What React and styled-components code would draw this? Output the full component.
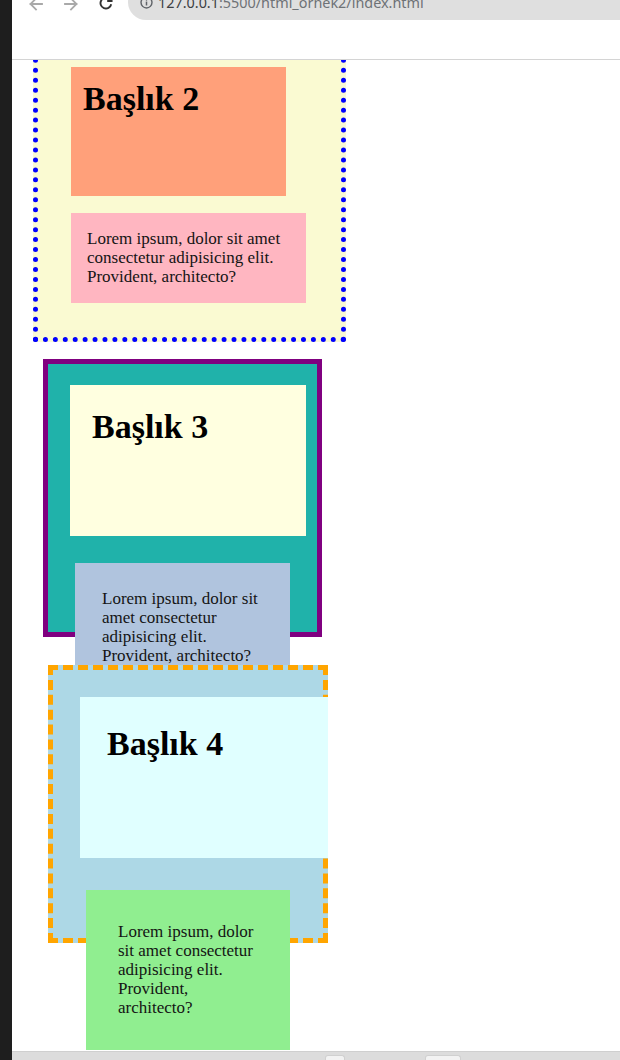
import React from 'react';
import styled, { createGlobalStyle } from 'styled-components';

const GlobalStyle = createGlobalStyle`
  html, body { margin: 0; padding: 0; background: #ffffff; overflow: hidden; }
  #root { width: 620px; height: 1060px; }
`;

const Frame = styled.div`
  display: flex;
  width: 620px;
  height: 1060px;
  overflow: hidden;
`;

const SideStrip = styled.div`
  flex: none;
  width: 12px;
  background: #1e1e1e;
`;

const BrowserWindow = styled.div`
  flex: 1;
  min-width: 0;
  display: flex;
  flex-direction: column;
  background: #ffffff;
`;

const Toolbar = styled.header`
  flex: none;
  height: 59px;
  border-bottom: 1px solid #d4d4d4;
  overflow: hidden;
  background: #ffffff;
`;

const NavRow = styled.div`
  height: 36px;
  margin-top: -16px;
  display: flex;
  align-items: center;
  padding-left: 16px;
`;

const NavButtons = styled.div`
  display: flex;
  align-items: center;
  gap: 19px;
`;

const NavIcon = styled.svg`
  flex: none;
  width: 16px;
  height: 16px;
  margin-top: ${p => p.$drop || 0}px;
  color: ${p => (p.$disabled ? '#a9a9a9' : '#333333')};
`;

const AddressPill = styled.div`
  flex: 1;
  height: 36px;
  margin-left: 14px;
  border-radius: 18px 0 0 18px;
  background: #dfdfdf;
  display: flex;
  align-items: center;
  padding-left: 12px;
  gap: 5px;
`;

const InfoIcon = styled.svg`
  flex: none;
  width: 13px;
  height: 13px;
  margin-top: 1px;
  color: #5f6368;
`;

const AddressText = styled.span`
  font-family: "Noto Sans", "Liberation Sans", sans-serif;
  font-size: 14.4px;
  color: #6e7276;
  white-space: nowrap;
  margin-top: 1px;
`;

const Host = styled.span`
  color: #3c4043;
`;

const Viewport = styled.main`
  flex: 1;
  min-height: 0;
  overflow: hidden;
`;

const Page = styled.div`
  margin-top: -32px;
  font-family: "Liberation Serif", "Times New Roman", serif;
  color: #111111;
`;

const DottedPanel = styled.section`
  box-sizing: border-box;
  width: 313px;
  margin-left: 21px;
  border: 5px dotted #0000ff;
  background: #fafad2;
  padding: 34px 0 34px 33px;
`;

const FramedPanel = styled.section`
  box-sizing: border-box;
  width: 279px;
  height: 278px;
  margin: 17px 0 0 31px;
  border: 5px solid #800080;
  background: #20b2aa;
  padding: 21px 0 0 22px;
`;

const DashedPanel = styled.section`
  box-sizing: border-box;
  width: 280px;
  height: 278px;
  margin: 28px 0 0 36px;
  border: 5px dashed #ffa500;
  background: #add8e6;
  padding: 27px 0 0 27px;
`;

const TitleCard = styled.div`
  box-sizing: border-box;
  width: ${p => p.$w}px;
  height: ${p => p.$h}px;
  padding: ${p => p.$pad}px;
  background: ${p => p.$bg};
`;

const Title = styled.h2`
  margin: 0;
  font-family: "Liberation Serif", "Times New Roman", serif;
  font-weight: bold;
  font-size: 34px;
  line-height: 39px;
  color: #000000;
  white-space: nowrap;
`;

const TextCard = styled.div`
  box-sizing: border-box;
  width: ${p => p.$w}px;
  margin: ${p => p.$mt}px 0 0 ${p => p.$ml}px;
  padding: ${p => p.$pad};
  background: ${p => p.$bg};
`;

const BodyText = styled.p`
  margin: 0;
  font-family: "Liberation Serif", "Times New Roman", serif;
  font-size: 17px;
  line-height: 19.2px;
  color: #141414;
`;

const StatusBar = styled.footer`
  flex: none;
  box-sizing: border-box;
  height: 9px;
  background: #dcdcdc;
  border-top: 1px solid #cfcfcf;
  display: flex;
  align-items: flex-end;
  padding-left: 313px;
  gap: 80px;
`;

const StatusChip = styled.div`
  width: ${p => p.$w}px;
  height: 4px;
  border-radius: 3px 3px 0 0;
  background: #f2f2f2;
  border: 1px solid #d0d0d0;
  border-bottom: none;
`;

const LOREM = 'Lorem ipsum, dolor sit amet consectetur adipisicing elit. Provident, architecto?';

function BackIcon() {
  return (
    <NavIcon viewBox="0 0 16 16" $disabled $drop={4} fill="none" stroke="currentColor" strokeWidth="1.8" strokeLinecap="square">
      <path d="M14 8H2.5M8 2.5L2.5 8L8 13.5" />
    </NavIcon>
  );
}

function ForwardIcon() {
  return (
    <NavIcon viewBox="0 0 16 16" $disabled $drop={4} fill="none" stroke="currentColor" strokeWidth="1.8" strokeLinecap="square">
      <path d="M2 8h11.5M8 2.5L13.5 8L8 13.5" />
    </NavIcon>
  );
}

function ReloadIcon() {
  return (
    <NavIcon viewBox="0 0 16 16" $drop={2} fill="none" stroke="currentColor" strokeWidth="1.9">
      <path d="M13.2 9.2A5.4 5.4 0 1 1 11.6 4.2" />
      <path d="M13.6 1.6v4.4H9.2" strokeLinejoin="miter" />
    </NavIcon>
  );
}

function SiteInfoIcon() {
  return (
    <InfoIcon viewBox="0 0 14 14" fill="none">
      <circle cx="7" cy="7" r="5.9" stroke="currentColor" strokeWidth="1.5" />
      <path d="M7 6v4.2" stroke="currentColor" strokeWidth="1.6" />
      <circle cx="7" cy="4.1" r="0.9" fill="currentColor" />
    </InfoIcon>
  );
}

export default function App() {
  return (
    <>
      <GlobalStyle />
      <Frame>
        <SideStrip />
        <BrowserWindow>
          <Toolbar>
            <NavRow>
              <NavButtons>
                <BackIcon />
                <ForwardIcon />
                <ReloadIcon />
              </NavButtons>
              <AddressPill>
                <SiteInfoIcon />
                <AddressText>
                  <Host>127.0.0.1</Host>:5500/html_ornek2/index.html
                </AddressText>
              </AddressPill>
            </NavRow>
          </Toolbar>

          <Viewport>
            <Page>
              <DottedPanel>
                <TitleCard $w={215} $h={129} $pad={12} $bg="#ffa07a">
                  <Title>Başlık 2</Title>
                </TitleCard>
                <TextCard $w={235} $mt={17} $ml={0} $pad="16px" $bg="#ffb6c1">
                  <BodyText>{LOREM}</BodyText>
                </TextCard>
              </DottedPanel>

              <FramedPanel>
                <TitleCard $w={236} $h={151} $pad={22} $bg="#ffffe0">
                  <Title>Başlık 3</Title>
                </TitleCard>
                <TextCard $w={215} $mt={27} $ml={5} $pad="26px 27px" $bg="#b0c4de">
                  <BodyText>{LOREM}</BodyText>
                </TextCard>
              </FramedPanel>

              <DashedPanel>
                <TitleCard $w={248} $h={161} $pad={27} $bg="#e0ffff">
                  <Title>Başlık 4</Title>
                </TitleCard>
                <TextCard $w={204} $mt={32} $ml={6} $pad="32px" $bg="#90ee90">
                  <BodyText>{LOREM}</BodyText>
                </TextCard>
              </DashedPanel>
            </Page>
          </Viewport>

          <StatusBar>
            <StatusChip $w={18} />
            <StatusChip $w={34} />
          </StatusBar>
        </BrowserWindow>
      </Frame>
    </>
  );
}
